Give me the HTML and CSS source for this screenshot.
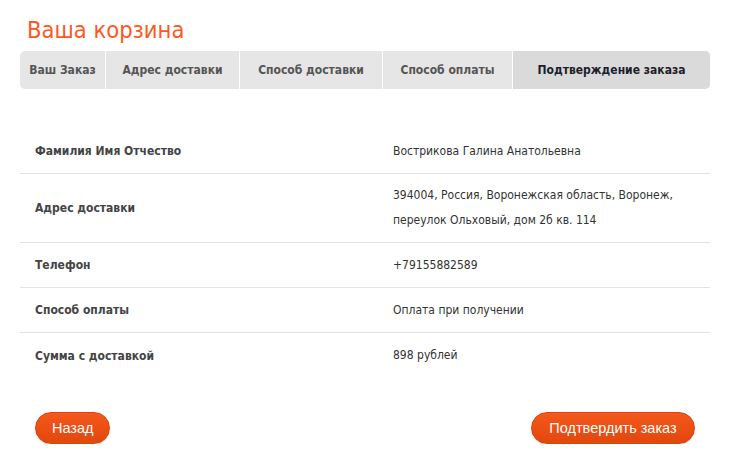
FILE: index.html
```html
<!DOCTYPE html>
<html lang="ru">
<head>
<meta charset="utf-8">
<link rel="stylesheet" href="styles.css">
</head>
<body>
<div class="page">
  <h1 class="title">Ваша корзина</h1>
  <nav class="steps">
    <div class="step s1">Ваш Заказ</div>
    <div class="step s2">Адрес доставки</div>
    <div class="step s3">Способ доставки</div>
    <div class="step s4">Способ оплаты</div>
    <div class="step s5 active">Подтверждение заказа</div>
  </nav>
  <div class="summary">
    <div class="row r1">
      <div class="label">Фамилия Имя Отчество</div>
      <div class="value">Вострикова Галина Анатольевна</div>
    </div>
    <div class="row r2">
      <div class="label">Адрес доставки</div>
      <div class="value">394004, Россия, Воронежская область, Воронеж,<br>переулок Ольховый, дом 2б кв. 114</div>
    </div>
    <div class="row">
      <div class="label">Телефон</div>
      <div class="value">+79155882589</div>
    </div>
    <div class="row">
      <div class="label">Способ оплаты</div>
      <div class="value">Оплата при получении</div>
    </div>
    <div class="row last">
      <div class="label">Сумма с доставкой</div>
      <div class="value">898 рублей</div>
    </div>
  </div>
  <div class="actions">
    <button class="btn back">Назад</button>
    <button class="btn confirm">Подтвердить заказ</button>
  </div>
</div>
</body>
</html>
```
FILE: styles.css
```css
* { box-sizing: border-box; }
body {
  margin: 0;
  background: #fff;
  font-family: "DejaVu Sans Condensed", "DejaVu Sans", sans-serif;
  color: #333;
}
.page {
  width: 690px;
  margin-left: 20px;
  padding-top: 14px;
}
.title {
  margin: 0 0 0 7px;
  padding-top: 1px;
  font-weight: normal;
  font-size: 23.5px;
  line-height: 30px;
  color: #ff5722;
  height: 37px;
}
.steps {
  display: flex;
  height: 38px;
  background: #e6e6e6;
  border-radius: 5px;
  overflow: hidden;
}
.step {
  display: flex;
  align-items: center;
  justify-content: center;
  font-size: 12px;
  font-weight: bold;
  color: #555;
  border-right: 1px solid #fff;
}
.s1 { width: 86px; }
.s2 { width: 134px; }
.s3 { width: 143px; }
.s4 { width: 130px; }
.s5 { flex: 1; border-right: 0; }
.step.active { background: #dadada; color: #1e1e2a; }
.summary {
  margin-top: 40px;
}
.row {
  display: flex;
  align-items: center;
  height: 45px;
  border-bottom: 1px solid #e3e3e3;
  font-size: 12px;
}
.row.r2 { height: 69px; }
.row.last { border-bottom: 0; }
.label {
  width: 373px;
  padding-left: 15px;
  font-weight: bold;
  color: #444;
}
.value {
  color: #333;
  line-height: 25px;
}
.actions {
  display: flex;
  justify-content: space-between;
  margin-top: 34px;
  padding: 0 15px;
}
.btn {
  height: 32px;
  border: 1px solid #d8450f;
  border-radius: 16px;
  background: linear-gradient(#f4581a, #e2470e);
  color: #fff;
  font-family: "Liberation Sans", Arial, sans-serif;
  font-size: 14.5px;
  padding: 0 16px;
  box-shadow: 0 1px 1px rgba(0,0,0,0.15);
}
.back { width: 75px; }
.confirm { width: 164px; }
```
